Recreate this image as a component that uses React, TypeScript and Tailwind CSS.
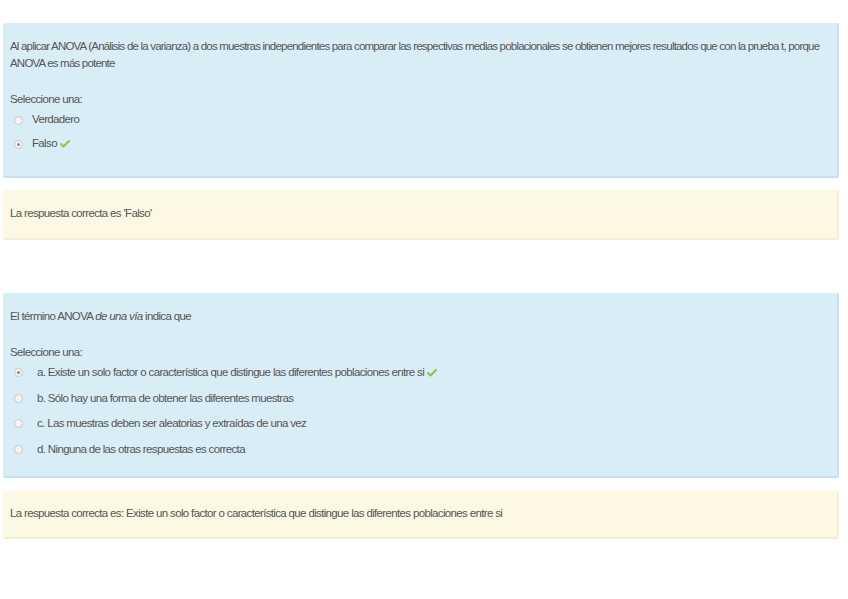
import { Check } from "lucide-react";

const font = { fontFamily: '"Liberation Sans", Arial, sans-serif' };

function Radio({ checked }: { checked?: boolean }) {
  return (
    <span className="flex h-[9px] w-[9px] items-center justify-center rounded-full border border-[#c8c8c8] bg-[#f4f4f4]">
      {checked && <span className="h-[3px] w-[3px] rounded-full bg-[#8a8a8a]" />}
    </span>
  );
}

function Tick() {
  return <Check className="ml-[2px] h-[12px] w-[12px] text-[#8cc63f]" strokeWidth={4} />;
}

function Option({
  label,
  checked,
  correct,
  gap,
  h,
}: {
  label: string;
  checked?: boolean;
  correct?: boolean;
  gap: string;
  h: string;
}) {
  return (
    <div className={`flex items-center ${h}`}>
      <div className={`flex pl-[4px] ${gap}`}>
        <Radio checked={checked} />
      </div>
      <span>{label}</span>
      {correct && <Tick />}
    </div>
  );
}

export default function App() {
  return (
    <div
      className="min-h-[599px] bg-white pt-[23px] pl-[3px] pr-[9px] text-[11.5px] tracking-[-0.65px] text-[#555]"
      style={font}
    >
      <div className="h-[155px] rounded-[2px] border-b-2 border-r-2 border-[#c4e0ef] bg-[#d9edf7] px-[7px] pt-[15px]">
        <p className="leading-[17px] tracking-[-0.8px]">
          Al aplicar ANOVA (Análisis de la varianza) a dos muestras independientes para comparar las respectivas medias
          poblacionales se obtienen mejores resultados que con la prueba t, porque ANOVA es más potente
        </p>
        <p className="mt-[19px] leading-[17px]">Seleccione una:</p>
        <div>
          <Option label="Verdadero" gap="w-[22px]" h="h-[24px]" />
          <Option label="Falso" checked correct gap="w-[22px]" h="h-[24px]" />
        </div>
      </div>

      <div className="mt-[12px] flex h-[50px] items-center rounded-[2px] border-b-2 border-r-2 border-[#f7eed0] bg-[#fcf8e3] px-[7px]">
        La respuesta correcta es 'Falso'
      </div>

      <div className="mt-[53px] h-[185px] rounded-[2px] border-b-2 border-r-2 border-[#c4e0ef] bg-[#d9edf7] px-[7px] pt-[15px]">
        <p className="leading-[17px]">
          El término ANOVA <i>de una vía</i> indica que
        </p>
        <p className="mt-[19px] leading-[17px]">Seleccione una:</p>
        <div className="-mt-[1px]">
          <Option
            label="a. Existe un solo factor o característica que distingue las diferentes poblaciones entre si"
            checked
            correct
            gap="w-[27px]"
            h="h-[25.5px]"
          />
          <Option label="b. Sólo hay una forma de obtener las diferentes muestras" gap="w-[27px]" h="h-[25.5px]" />
          <Option label="c. Las muestras deben ser aleatorias y extraídas de una vez" gap="w-[27px]" h="h-[25.5px]" />
          <Option label="d. Ninguna de las otras respuestas es correcta" gap="w-[27px]" h="h-[25.5px]" />
        </div>
      </div>

      <div className="mt-[13px] flex h-[48px] items-center rounded-[2px] border-b-2 border-r-2 border-[#f7eed0] bg-[#fcf8e3] px-[7px]">
        La respuesta correcta es: Existe un solo factor o característica que distingue las diferentes poblaciones entre si
      </div>
    </div>
  );
}
